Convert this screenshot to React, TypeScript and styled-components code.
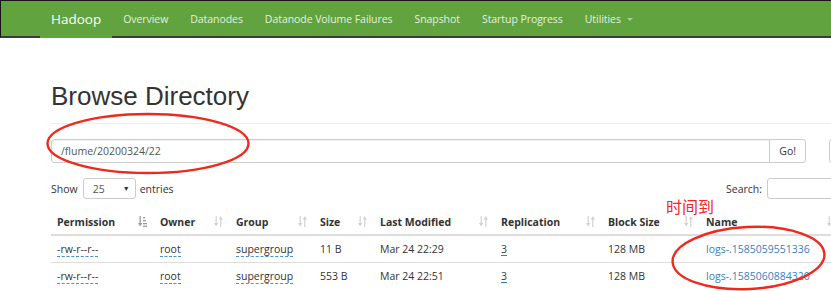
import React from "react";
import styled, { createGlobalStyle } from "styled-components";

const GlobalStyle = createGlobalStyle`
  html, body {
    margin: 0;
    padding: 0;
    background: #fff;
    overflow: hidden;
  }
  body {
    font-family: "Open Sans", "Noto Sans", sans-serif;
    font-size: 10.5px;
    color: #333;
  }
`;

const Page = styled.div`
  position: relative;
  width: 831px;
  height: 291px;
  overflow: hidden;
`;

const NavBar = styled.div`
  box-sizing: border-box;
  height: 38px;
  background: #60a33f;
  border-top: 1px solid #161616;
  border-left: 1px solid #161616;
  border-bottom: 2px solid #3b3b3b;
  display: flex;
  align-items: stretch;
  padding-left: 39px;
`;

const Brand = styled.div`
  display: flex;
  align-items: center;
  padding: 1px 11px 0;
  margin-bottom: -2px;
  border-bottom: 2px solid #60a33f;
  font-size: 13.5px;
  color: #fff;
`;

const NavLink = styled.div`
  display: flex;
  align-items: center;
  padding: 0 11px;
  color: #e6efe1;
  white-space: nowrap;
  letter-spacing: -0.06px;
`;

const Caret = styled.span`
  display: inline-block;
  margin-left: 6px;
  margin-top: 1px;
  border-left: 3px solid transparent;
  border-right: 3px solid transparent;
  border-top: 3px solid #a9cf97;
`;

const Main = styled.div`
  padding-left: 51px;
  width: 866px;
`;

const PageHeader = styled.div`
  margin-top: 43px;
  padding-bottom: 12px;
  border-bottom: 1px solid #eee;
`;

const Title = styled.h1`
  margin: 0;
  font-family: "Liberation Sans", Arial, sans-serif;
  font-weight: 400;
  font-size: 26px;
  line-height: 30px;
  color: #333;
`;

const PathRow = styled.div`
  display: flex;
  margin-top: 15px;
  height: 24px;
`;

const InputGroup = styled.div`
  display: flex;
  width: 755px;
`;

const PathInput = styled.div`
  flex: 1;
  box-sizing: border-box;
  border: 1px solid #ccc;
  border-radius: 3px 0 0 3px;
  padding-left: 9px;
  display: flex;
  align-items: center;
  color: #555;
  box-shadow: inset 0 1px 1px rgba(0, 0, 0, 0.06);
`;

const Button = styled.div<{ $rounded?: string }>`
  box-sizing: border-box;
  height: 24px;
  border: 1px solid #ccc;
  border-radius: ${(p) => p.$rounded || "3px"};
  padding: 0 9px;
  display: flex;
  align-items: center;
  color: #333;
  background: #fff;
`;

const GoButton = styled(Button)`
  margin-left: -1px;
`;

const ToolButton = styled(Button)`
  margin-left: 23px;
  width: 30px;
`;

const Toolbar = styled.div`
  display: flex;
  align-items: center;
  margin-top: 15px;
  height: 21px;
`;

const Label = styled.span`
  color: #333;
`;

const Select = styled.div`
  box-sizing: border-box;
  width: 53px;
  height: 21px;
  margin: 0 4px 0 5px;
  border: 1px solid #ccc;
  border-radius: 3px;
  padding: 0 5px 0 9px;
  display: flex;
  align-items: center;
  justify-content: space-between;
  color: #555;
`;

const SelectArrow = styled.span`
  font-size: 7px;
  color: #333;
`;

const Spacer = styled.div`
  flex: 1;
`;

const SearchInput = styled.div`
  box-sizing: border-box;
  width: 150px;
  height: 21px;
  margin-left: 5px;
  border: 1px solid #ccc;
  border-radius: 3px;
`;

const Table = styled.table`
  margin-top: 6px;
  width: 792px;
  table-layout: fixed;
  border-collapse: collapse;
  border-spacing: 0;
`;

const Th = styled.th`
  box-sizing: border-box;
  height: 30px;
  padding: 4px 7px 0 6px;
  text-align: left;
  font-weight: 700;
  color: #333;
  border-bottom: 2px solid #ddd;
`;

const ThInner = styled.div`
  display: flex;
  align-items: center;
  justify-content: space-between;
  white-space: nowrap;
`;

const Td = styled.td<{ $first?: boolean }>`
  box-sizing: border-box;
  height: 27px;
  padding: 0 6px;
  border-top: ${(p) => (p.$first ? "none" : "1px solid #ddd")};
  white-space: nowrap;
  vertical-align: middle;
  color: #333;
`;

const Dotted = styled.span`
  border-bottom: 1px dashed #4a8fd1;
`;

const Underlined = styled.span`
  text-decoration: underline;
  text-decoration-color: #337ab7;
  text-underline-offset: 2px;
  color: #2c3e50;
`;

const FileLink = styled.span`
  color: #3a80c2;
`;

const Annotations = styled.svg`
  position: absolute;
  left: 0;
  top: 0;
  pointer-events: none;
`;

const Note = styled.span`
  position: absolute;
  left: 666px;
  top: 195px;
  font-family: "Noto Sans CJK SC", "Noto Sans", sans-serif;
  font-size: 16px;
  line-height: 22px;
  color: #f0291d;
`;

const SortIcon = ({ active }: { active?: boolean }) =>
  active ? (
    <svg width="9" height="11" viewBox="0 0 9 11">
      <rect x="1.5" y="0" width="1.3" height="8" fill="#9a9a9a" />
      <polygon points="0,7 4.3,7 2.15,10.5" fill="#9a9a9a" />
      <rect x="5" y="1" width="2" height="1.3" fill="#9a9a9a" />
      <rect x="5" y="4" width="3" height="1.3" fill="#9a9a9a" />
      <rect x="5" y="7" width="4" height="1.3" fill="#9a9a9a" />
      <rect x="5" y="9.6" width="4" height="1.3" fill="#9a9a9a" />
    </svg>
  ) : (
    <svg width="9" height="11" viewBox="0 0 9 11">
      <rect x="1.6" y="0" width="1.2" height="8" fill="#d2d2d2" />
      <polygon points="0,7 4.4,7 2.2,10.5" fill="#d2d2d2" />
      <rect x="6.2" y="3" width="1.2" height="8" fill="#d2d2d2" />
      <polygon points="4.6,3.5 9,3.5 6.8,0" fill="#d2d2d2" />
    </svg>
  );

const columns = [
  { title: "Permission", width: 103, active: true },
  { title: "Owner", width: 76 },
  { title: "Group", width: 84 },
  { title: "Size", width: 60 },
  { title: "Last Modified", width: 121 },
  { title: "Replication", width: 107 },
  { title: "Block Size", width: 98 },
  { title: "Name", width: 143 },
];

const files = [
  { size: "11 B", modified: "Mar 24 22:29", name: "logs-.1585059551336" },
  { size: "553 B", modified: "Mar 24 22:51", name: "logs-.1585060884320" },
];

const navItems = [
  "Overview",
  "Datanodes",
  "Datanode Volume Failures",
  "Snapshot",
  "Startup Progress",
];

const App = () => {
  return (
    <Page>
      <GlobalStyle />
      <NavBar>
        <Brand>Hadoop</Brand>
        {navItems.map((item) => (
          <NavLink key={item}>{item}</NavLink>
        ))}
        <NavLink>
          Utilities
          <Caret />
        </NavLink>
      </NavBar>
      <Main>
        <PageHeader>
          <Title>Browse Directory</Title>
        </PageHeader>
        <PathRow>
          <InputGroup>
            <PathInput>/flume/20200324/22</PathInput>
            <GoButton $rounded="0 3px 3px 0">Go!</GoButton>
          </InputGroup>
          <ToolButton />
        </PathRow>
        <Toolbar>
          <Label>Show</Label>
          <Select>
            25
            <SelectArrow>▼</SelectArrow>
          </Select>
          <Label>entries</Label>
          <Spacer />
          <Label>Search:</Label>
          <SearchInput />
        </Toolbar>
        <Table>
          <colgroup>
            {columns.map((c) => (
              <col key={c.title} style={{ width: c.width }} />
            ))}
          </colgroup>
          <thead>
            <tr>
              {columns.map((c) => (
                <Th key={c.title}>
                  <ThInner>
                    {c.title}
                    <SortIcon active={c.active} />
                  </ThInner>
                </Th>
              ))}
            </tr>
          </thead>
          <tbody>
            {files.map((f, i) => (
              <tr key={f.name}>
                <Td $first={i === 0}>
                  <Dotted>-rw-r--r--</Dotted>
                </Td>
                <Td $first={i === 0}>
                  <Dotted>root</Dotted>
                </Td>
                <Td $first={i === 0}>
                  <Dotted>supergroup</Dotted>
                </Td>
                <Td $first={i === 0}>{f.size}</Td>
                <Td $first={i === 0}>{f.modified}</Td>
                <Td $first={i === 0}>
                  <Underlined>3</Underlined>
                </Td>
                <Td $first={i === 0}>128 MB</Td>
                <Td $first={i === 0}>
                  <FileLink>{f.name}</FileLink>
                </Td>
              </tr>
            ))}
          </tbody>
        </Table>
      </Main>
      <Note>时间到</Note>
      <Annotations width="831" height="291" viewBox="0 0 831 291">
        <ellipse
          cx="148"
          cy="143.5"
          rx="100.5"
          ry="29.5"
          fill="none"
          stroke="#ee2a1e"
          strokeWidth="2.4"
        />
        <ellipse
          cx="748.5"
          cy="258"
          rx="76"
          ry="31"
          transform="rotate(-3 748.5 258)"
          fill="none"
          stroke="#ee2a1e"
          strokeWidth="2.4"
        />
      </Annotations>
    </Page>
  );
};

export default App;
